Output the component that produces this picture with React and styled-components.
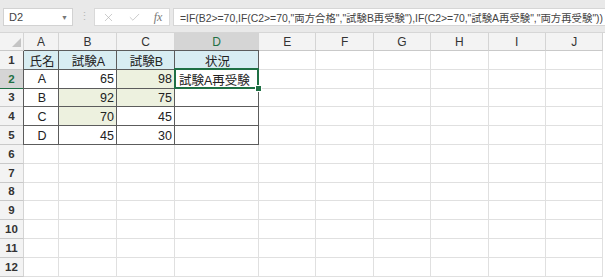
import React from "react"
import styled, { createGlobalStyle } from "styled-components"
import { X, Check } from "lucide-react"

const GlobalStyle = createGlobalStyle`
  html, body {
    margin: 0;
    padding: 0;
    background: #ffffff;
  }
  body {
    width: 605px;
    height: 277px;
    overflow: hidden;
    font-family: "Liberation Sans", "Noto Sans CJK JP", sans-serif;
  }
`

const GREEN = "#1f7044"
const GRID = "#e0e0e0"
const TABLE_LINE = "#5c5c5c"

const Page = styled.div`
  display: flex;
  flex-direction: column;
  width: 605px;
  height: 277px;
  overflow: hidden;
`

const FormulaBar = styled.div`
  display: flex;
  align-items: center;
  height: 33px;
  padding: 0 0 0 3px;
  background: #e9e9e9;
  box-sizing: border-box;
  border-bottom: 1px solid #d6d6d6;
`

const NameBox = styled.div`
  display: flex;
  align-items: center;
  justify-content: space-between;
  width: 70px;
  height: 18px;
  margin-top: 2px;
  padding: 0 4px 0 5px;
  box-sizing: border-box;
  background: #fff;
  border: 1px solid #d2d2d2;
  font-size: 11px;
  color: #444;
`

const Caret = styled.span`
  font-size: 7px;
  color: #777;
`

const Grip = styled.div`
  width: 21px;
  text-align: center;
  color: #b8b8b8;
  font-size: 11px;
  letter-spacing: -1px;
`

const FuncBox = styled.div`
  display: flex;
  align-items: center;
  justify-content: space-around;
  width: 76px;
  height: 18px;
  margin-top: 2px;
  box-sizing: border-box;
  background: #fff;
  border: 1px solid #d9d9d9;
  color: #b0b0b0;
`

const Fx = styled.span`
  font-family: "Liberation Serif", serif;
  font-style: italic;
  font-size: 12px;
  color: #777;
`

const FormulaInput = styled.div`
  flex: 1;
  height: 18px;
  margin: 2px 0 0 3px;
  padding-left: 6px;
  box-sizing: border-box;
  display: flex;
  align-items: center;
  background: #fff;
  border: 1px solid #d6d6d6;
  border-right: none;
  font-size: 10.4px;
  color: #444;
  white-space: nowrap;
  overflow: hidden;
`

const Sheet = styled.div`
  display: grid;
  grid-template-columns: 24px 35px 58px 58px 84px repeat(6, 57.4px);
  grid-template-rows: 18px repeat(12, 18.8px);
  background: #fff;
`

const HeadCell = styled.div`
  display: flex;
  align-items: center;
  justify-content: center;
  box-sizing: border-box;
  background: ${(p) => (p.$active ? "#d5d5d5" : "#f3f3f3")};
  color: ${(p) => (p.$active ? GREEN : "#333")};
  border-right: 1px solid #d4d4d4;
  border-bottom: 1px solid ${(p) => (p.$active ? GREEN : "#c9c9c9")};
  font-size: ${(p) => (p.$row ? "11.5px" : "12px")};
  font-weight: ${(p) => (p.$row ? "bold" : "normal")};
`

const Corner = styled(HeadCell)`
  justify-content: flex-end;
  align-items: flex-end;
  padding: 0 2px 3px 0;
`

const Cell = styled.div`
  position: relative;
  display: flex;
  align-items: center;
  justify-content: ${(p) =>
    p.$align === "right" ? "flex-end" : p.$align === "left" ? "flex-start" : "center"};
  padding: 1px 2px 0 4px;
  box-sizing: border-box;
  font-size: 12.5px;
  color: #222;
  white-space: nowrap;
  background: ${(p) => p.$fill || "#fff"};
  border-right: 1px solid ${(p) => (p.$table ? TABLE_LINE : GRID)};
  border-bottom: 1px solid ${(p) => (p.$table ? TABLE_LINE : GRID)};
  box-shadow: ${(p) =>
    [p.$leftEdge && `-1px 0 0 ${TABLE_LINE}`, p.$topEdge && `0 -1px 0 ${TABLE_LINE}`]
      .filter(Boolean)
      .join(", ") || "none"};

  ${(p) =>
    p.$selected &&
    `
    &::after {
      content: "";
      position: absolute;
      inset: -2px -1px -1px -1px;
      border: 2px solid ${GREEN};
      pointer-events: none;
    }
    &::before {
      content: "";
      position: absolute;
      right: -4px;
      bottom: -4px;
      width: 5px;
      height: 5px;
      background: ${GREEN};
      border: 1px solid #fff;
      z-index: 2;
    }
  `}
`

const columns = ["A", "B", "C", "D", "E", "F", "G", "H", "I", "J"]

const HEADER_FILL = "#d8edf2"
const PASS_FILL = "#edf1df"

const table = [
  ["氏名", "試験A", "試験B", "状況"],
  ["A", 65, 98, "試験A再受験"],
  ["B", 92, 75, ""],
  ["C", 70, 45, ""],
  ["D", 45, 30, ""],
]

const formula =
  '=IF(B2>=70,IF(C2>=70,"両方合格","試験B再受験"),IF(C2>=70,"試験A再受験","両方再受験"))'

function CornerMark() {
  return (
    <svg width="9" height="9" viewBox="0 0 9 9">
      <polygon points="9,0 9,9 0,9" fill="#c4c4c4" />
    </svg>
  )
}

function cellProps(r, c) {
  const inTable = r < table.length && c < 4
  if (!inTable) return { value: "", props: {} }
  const value = table[r][c]
  const props = { $table: true, $leftEdge: c === 0, $topEdge: r === 0 }
  if (r === 0) {
    props.$fill = HEADER_FILL
  } else if (typeof value === "number") {
    props.$align = "right"
    if (value >= 70) props.$fill = PASS_FILL
  } else if (c === 3) {
    props.$align = "left"
  }
  if (r === 1 && c === 3) props.$selected = true
  return { value, props }
}

export default function App() {
  const rows = Array.from({ length: 12 }, (_, i) => i)
  return (
    <Page>
      <GlobalStyle />
      <FormulaBar>
        <NameBox>
          <span>D2</span>
          <Caret>▼</Caret>
        </NameBox>
        <Grip>⋮</Grip>
        <FuncBox>
          <X size={13} strokeWidth={1.2} />
          <Check size={13} strokeWidth={1.2} />
          <Fx>fx</Fx>
        </FuncBox>
        <FormulaInput>{formula}</FormulaInput>
      </FormulaBar>

      <Sheet>
        <Corner>
          <CornerMark />
        </Corner>
        {columns.map((col) => (
          <HeadCell key={col} $active={col === "D"}>
            {col}
          </HeadCell>
        ))}
        {rows.map((r) => (
          <React.Fragment key={r}>
            <HeadCell $row $active={r === 1}>
              {r + 1}
            </HeadCell>
            {columns.map((col, c) => {
              const { value, props } = cellProps(r, c)
              return (
                <Cell key={col} {...props}>
                  {value}
                </Cell>
              )
            })}
          </React.Fragment>
        ))}
      </Sheet>
    </Page>
  )
}
